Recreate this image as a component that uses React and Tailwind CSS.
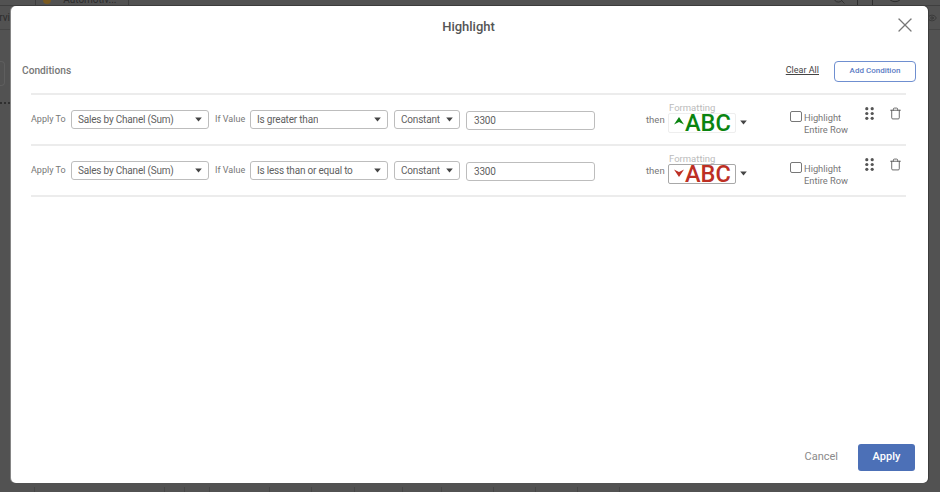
import React from "react";
import { X, Trash, Search, Eye } from "lucide-react";

const font = { fontFamily: "Roboto, sans-serif" };

const footerGaps = [35, 130, 20, 25, 60, 42, 43, 48, 39, 52, 42, 42, 42];

const Caret = ({ className = "" }) => (
  <svg width="7" height="5" viewBox="0 0 7 5" className={`shrink-0 ${className}`}>
    <path d="M0.2 0.5h6.6L3.5 4.5z" fill="#444" />
  </svg>
);

const Select = ({ value, width }) => (
  <div className={`${width} h-[19px] shrink-0 flex items-center justify-between pl-[6px] pr-[6px] border border-[#bdbdbd] rounded-[3px] bg-white text-[10px] tracking-[-0.2px] text-[#5f5f5f]`}>
    <span className="truncate">{value}</span>
    <Caret />
  </div>
);

const Arrow = ({ up, color }) => (
  <svg width="10" height="8" viewBox="0 0 10 8" className={`shrink-0 ${up ? "mb-[4px]" : "mb-[2px]"}`}>
    {up ? (
      <path d="M5 0L10 7.5L5 5L0 7.5z" fill={color} />
    ) : (
      <path d="M0 0.5L5 3L10 0.5L5 8z" fill={color} />
    )}
  </svg>
);

const DragDots = () => (
  <svg width="9" height="13" viewBox="0 0 9 13" fill="#555" className="shrink-0">
    <circle cx="1.8" cy="1.7" r="1.6" />
    <circle cx="7.2" cy="1.7" r="1.6" />
    <circle cx="1.8" cy="6.5" r="1.6" />
    <circle cx="7.2" cy="6.5" r="1.6" />
    <circle cx="1.8" cy="11.3" r="1.6" />
    <circle cx="7.2" cy="11.3" r="1.6" />
  </svg>
);

const ConditionRow = ({ operator, up, color, boxBorder }) => (
  <div className="h-[51px] border-b-2 border-[#ececec] flex items-start">
    <span className="w-[40px] shrink-0 mt-[18px] text-[9px] text-[#777]">Apply To</span>
    <div className="mt-[15px]"><Select value="Sales by Chanel (Sum)" width="w-[138px]" /></div>
    <span className="w-[41px] shrink-0 pl-[6px] mt-[18px] text-[9px] text-[#777]">If Value</span>
    <div className="mt-[15px]"><Select value={operator} width="w-[138px]" /></div>
    <div className="mt-[15px] ml-[6px]"><Select value="Constant" width="w-[66px]" /></div>
    <div className="mt-[16px] ml-[6px] w-[129px] h-[19px] shrink-0 flex items-center px-[7px] border border-[#bdbdbd] rounded-[3px] text-[10px] tracking-[-0.2px] text-[#5f5f5f]">
      3300
    </div>
    <span className="ml-[51px] w-[22px] shrink-0 mt-[18px] text-[9.5px] text-[#777]">then</span>
    <div className="w-[68px] shrink-0 mt-[7px]">
      <div className="pl-[1px] h-[11px] leading-[11px] text-[9.5px] text-[#bbb]">Formatting</div>
      <div className={`h-[20px] flex items-center pl-[5px] rounded-[2px] border ${boxBorder}`}>
        <Arrow up={up} color={color} />
        <span className="text-[23.5px] leading-[18px] font-medium ml-[1px]" style={{ color }}>ABC</span>
      </div>
    </div>
    <Caret className="ml-[4px] mt-[25px]" />
    <div className="ml-[43px] mt-[16px] w-[12px] h-[11px] shrink-0 border border-[#777] rounded-[2px]" />
    <div className="ml-[2px] mt-[17px] w-[60px] shrink-0 text-[9.3px] leading-[12px] text-[#777]">
      <div>Highlight</div>
      <div>Entire Row</div>
    </div>
    <div className="mt-[12px] ml-[1px]"><DragDots /></div>
    <Trash size={13} strokeWidth={1.6} className="shrink-0 ml-[15px] mt-[12px] text-[#555]" />
  </div>
);

export default function App() {
  return (
    <div className="relative w-[940px] h-[492px] overflow-hidden bg-[#525252] flex flex-col" style={font}>
      {/* dimmed page behind the dialog */}
      <div className="h-[6px] shrink-0 flex items-start overflow-hidden border-b border-[#3f3f3f]">
        <div className="ml-[35px] w-[94px] h-[6px] flex gap-[7px] pl-[7px] border-x border-[#3f3f3f] overflow-hidden">
          <div className="w-[8px] h-[8px] mt-[-4px] rounded-full bg-[#7a5a20]" />
          <span className="text-[10px] leading-[6px] mt-[-3px] text-[#2c2c2c]">- Automotiv...</span>
        </div>
        <div className="ml-[703px] flex items-start gap-[11px] text-[#2f2f2f]">
          <Search size={14} strokeWidth={1.5} className="mt-[-9px]" />
          <div className="w-[16px] h-[6px] border-x border-b border-[#2f2f2f]" />
          <Eye size={16} strokeWidth={1.5} className="mt-[-11px] ml-[3px]" />
        </div>
      </div>
      <div className="h-[24px] shrink-0 border-b border-[#464646] flex items-center justify-between">
        <span className="text-[10px] ml-[-6px] text-[#2c2c2c]">ervic</span>
        <Eye size={10} strokeWidth={1.5} className="mr-[3px] text-[#2f2f2f]" />
      </div>
      <div className="mt-[31px] w-[5px] h-[25px] rounded-r-[4px] border-y border-r border-[#5e5e5e]" />
      <div className="mt-[16px] w-[10px] border-t-2 border-dotted border-[#2f2f2f]" />
      <div className="mt-auto h-[5px] flex">
        {footerGaps.map((gap, i) => (
          <div key={i} className="shrink-0 h-[5px] border-r border-[#464646]" style={{ width: gap }} />
        ))}
      </div>

      {/* dialog */}
      <div className="absolute left-[11px] top-[6px] w-[917px] h-[477px] bg-white rounded-[5px] flex flex-col shadow-[-1px_0_0_#858585,1px_0_0_#3c3c3c,0_-1px_0_#3c3c3c]">
        <div className="relative h-[40px] shrink-0 flex items-center justify-center pr-[2px]">
          <span className="text-[13px] font-medium text-[#555] mt-[2px]">Highlight</span>
          <X size={24} strokeWidth={1.3} className="absolute left-[882px] top-[7px] text-[#777]" />
        </div>

        <div className="h-[47px] shrink-0 flex items-center pl-[11px] pr-[12px] pt-[3px]">
          <span className="text-[10.2px] font-medium text-[#777]">Conditions</span>
          <span className="ml-auto text-[9px] text-[#444] underline">Clear All</span>
          <button className="ml-[15px] w-[82px] h-[21px] border border-[#6f8fd0] rounded-[4px] text-[8px] font-medium text-[#5b7cc4]">
            Add Condition
          </button>
        </div>

        <div className="ml-[20px] w-[875px] border-t-2 border-[#ececec]">
          <ConditionRow operator="Is greater than" up color="#0a8410" boxBorder="border-[#eeeeee]" />
          <ConditionRow operator="Is less than or equal to" up={false} color="#bd2f24" boxBorder="border-[#a8a8a8]" />
        </div>

        <div className="mt-auto mb-[12px] flex items-center justify-end pr-[13px]">
          <span className="text-[11px] text-[#8a8a8a] mr-[20px]">Cancel</span>
          <button className="w-[57px] h-[27px] rounded-[3px] bg-[#4c70b7] text-white text-[11px] font-medium">Apply</button>
        </div>
      </div>
    </div>
  );
}
